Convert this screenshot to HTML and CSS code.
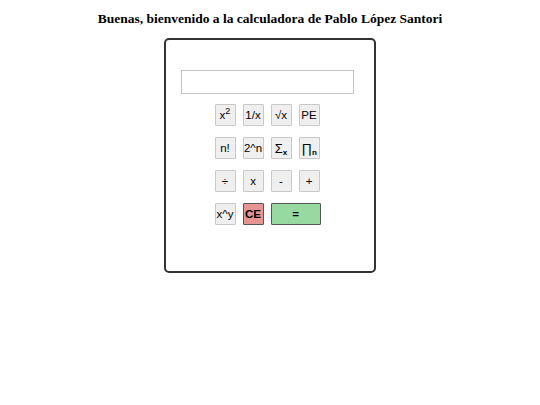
FILE: index.html
```html
<!DOCTYPE html>
<html lang="es">
<head>
<meta charset="utf-8">
<link rel="stylesheet" href="styles.css">
</head>
<body>
<h1 class="title">Buenas, bienvenido a la calculadora de Pablo López Santori</h1>
<div class="calc">
  <input class="display" type="text">
  <div class="keys">
    <div class="row">
      <button class="key"><span>x<sup>2</sup></span></button>
      <button class="key">1/x</button>
      <button class="key">√x</button>
      <button class="key">PE</button>
    </div>
    <div class="row">
      <button class="key">n!</button>
      <button class="key">2^n</button>
      <button class="key big"><span>Σ<sub>x</sub></span></button>
      <button class="key big"><span>∏<sub>n</sub></span></button>
    </div>
    <div class="row">
      <button class="key">÷</button>
      <button class="key">x</button>
      <button class="key">-</button>
      <button class="key">+</button>
    </div>
    <div class="row">
      <button class="key">x^y</button>
      <button class="key ce">CE</button>
      <button class="key eq">=</button>
    </div>
  </div>
</div>
</body>
</html>
```
FILE: styles.css
```css
html, body {
  margin: 0;
  padding: 0;
  background: #fff;
}
body {
  font-family: "Liberation Serif", "Times New Roman", serif;
  display: flex;
  flex-direction: column;
  align-items: center;
}
.title {
  font-size: 13.5px;
  font-weight: bold;
  margin: 11px 0 11px;
  line-height: 16px;
  color: #000;
}
.calc {
  width: 203px;
  height: 231px;
  padding-right: 5px;
  border: 2px solid #333;
  border-radius: 5px;
  display: flex;
  flex-direction: column;
  align-items: center;
  box-sizing: content-box;
}
.display {
  margin: 30px 0 0;
  width: 173px;
  height: 24px;
  box-sizing: border-box;
  border: 1px solid #c4c4c4;
  padding: 0;
  outline: none;
}
.keys {
  margin-top: 10px;
  display: flex;
  flex-direction: column;
  gap: 11px;
}
.row {
  display: flex;
  gap: 7px;
}
.key {
  width: 21px;
  height: 22px;
  box-sizing: border-box;
  padding: 0;
  border: 1px solid #c8c8c8;
  background: #efefef;
  font-family: "Liberation Sans", Arial, sans-serif;
  font-size: 11.5px;
  color: #000;
  display: flex;
  align-items: center;
  justify-content: center;
  border-radius: 1px;
}
.key sup {
  font-size: 9px;
  line-height: 0;
  vertical-align: 5px;
}
.key sub {
  font-size: 8px;
  font-weight: bold;
  line-height: 0;
  vertical-align: -2px;
}
.big {
  font-size: 13px;
}
.ce {
  background: #e69593;
  border-color: #555;
  font-weight: bold;
}
.eq {
  width: 50px;
  background: #98d9a1;
  border-color: #555;
  font-weight: bold;
}
```
